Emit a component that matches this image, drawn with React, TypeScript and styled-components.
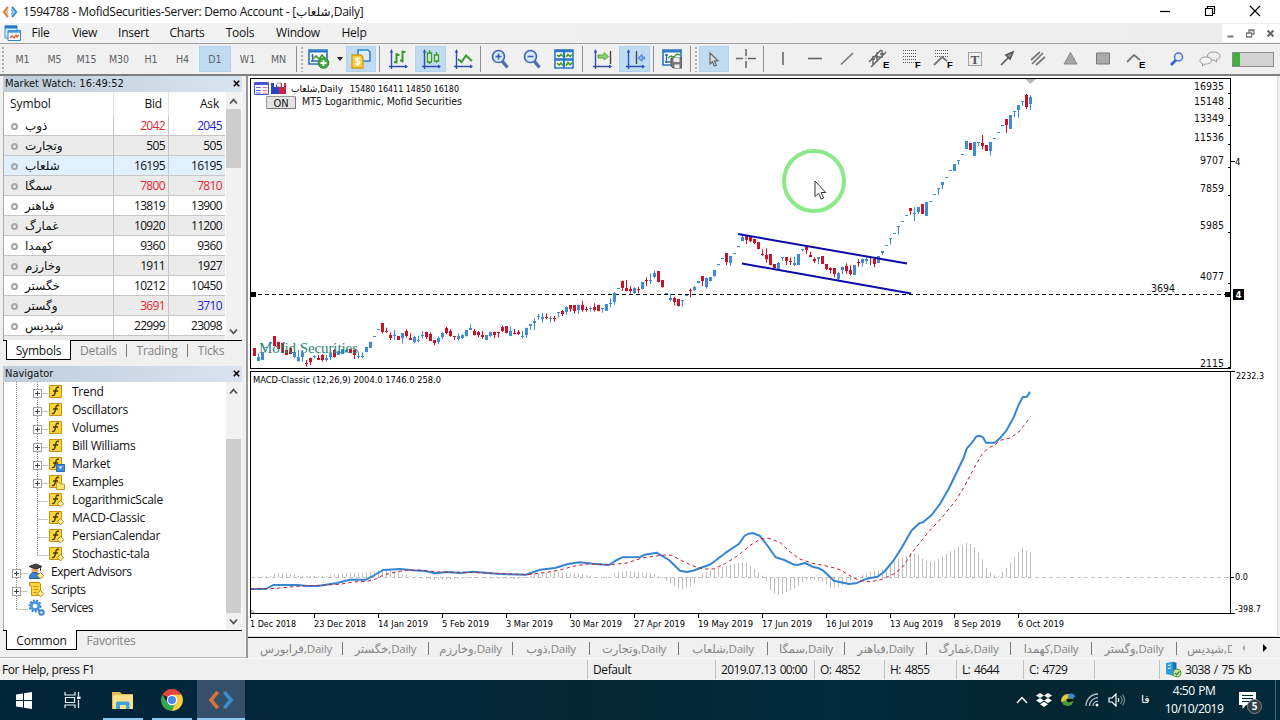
import type { ReactNode } from "react";
import styled, { createGlobalStyle, css } from "styled-components";

const GlobalStyle = createGlobalStyle`
  * { box-sizing: border-box; }
  body { margin: 0; overflow: hidden; background: #f0f0f0; }
  svg { display: block; flex-shrink: 0; }
`;

const ui = `"Open Sans", "DejaVu Sans", sans-serif`;
const tahoma = `"DejaVu Sans Condensed", "DejaVu Sans", sans-serif`;

/* ---------- data ---------- */

const MENUS: [string, number][] = [
  ["File", 39],
  ["View", 49],
  ["Insert", 49],
  ["Charts", 58],
  ["Tools", 48],
  ["Window", 68],
  ["Help", 44],
];

const PERIODS: [string, number][] = [
  ["M1", 33],
  ["M5", 31],
  ["M15", 33],
  ["M30", 32],
  ["H1", 32],
  ["H4", 31],
  ["D1", 34],
  ["W1", 31],
  ["MN", 31],
];

type Quote = { name: string; bid: string; ask: string; bidColor?: string; askColor?: string };

const RED = "#e8222e";
const BLUE = "#2222d8";

const QUOTES: Quote[] = [
  { name: "ذوب", bid: "2042", ask: "2045", bidColor: RED, askColor: BLUE },
  { name: "وتجارت", bid: "505", ask: "505" },
  { name: "شلعاب", bid: "16195", ask: "16195" },
  { name: "سمگا", bid: "7800", ask: "7810", bidColor: RED, askColor: RED },
  { name: "فباهنر", bid: "13819", ask: "13900" },
  { name: "غمارگ", bid: "10920", ask: "11200" },
  { name: "کهمدا", bid: "9360", ask: "9360" },
  { name: "وخارزم", bid: "1911", ask: "1927" },
  { name: "خگستر", bid: "10212", ask: "10450" },
  { name: "وگستر", bid: "3691", ask: "3710", bidColor: RED, askColor: BLUE },
  { name: "شپدیس", bid: "22999", ask: "23098" },
];

type NodeKind = "folder" | "market" | "examples" | "item" | "expert" | "script" | "service";

const TREE: { label: string; kind: NodeKind; root?: boolean; expand?: boolean; last?: boolean }[] = [
  { label: "Trend", kind: "folder", expand: true },
  { label: "Oscillators", kind: "folder", expand: true },
  { label: "Volumes", kind: "folder", expand: true },
  { label: "Bill Williams", kind: "folder", expand: true },
  { label: "Market", kind: "market", expand: true },
  { label: "Examples", kind: "examples", expand: true },
  { label: "LogarithmicScale", kind: "item" },
  { label: "MACD-Classic", kind: "item" },
  { label: "PersianCalendar", kind: "item" },
  { label: "Stochastic-tala", kind: "item", last: true },
  { label: "Expert Advisors", kind: "expert", root: true, expand: true },
  { label: "Scripts", kind: "script", root: true, expand: true },
  { label: "Services", kind: "service", root: true, last: true },
];

const CHART_TABS: [string, number][] = [
  ["فرابورس", 93],
  ["خگستر", 86],
  ["وخارزم", 84],
  ["ذوب", 77],
  ["وتجارت", 89],
  ["شلعاب", 89],
  ["سمگا", 77],
  ["فباهنر", 82],
  ["غمارگ", 84],
  ["کهمدا", 81],
  ["وگستر", 85],
];

const STATUS: [string, number][] = [
  ["Default", 128],
  ["2019.07.13 00:00", 99],
  ["O: 4852", 70],
  ["H: 4855", 72],
  ["L: 4644", 67],
  ["C: 4729", 71],
  ["", 65],
];

// Bars: colour, body top, body bottom, wick top, wick bottom (in thirds of a pixel)
type Bar = ["r" | "b", number, number, number?, number?];

const BARS_WINTER: Bar[] = [
  ["r", 399, 423], ["b", 425, 437, 415, 437], ["b", 410, 433], ["b", 395, 398], ["b", 380, 383],
  ["r", 363, 392], ["r", 380, 402], ["r", 383, 412], ["r", 405, 420], ["r", 398, 415],
  ["b", 410, 425, 403, 430], ["b", 425, 438, 405, 440], ["b", 415, 427, 405, 440], ["r", 445, 448, 435, 455],
  ["r", 430, 443, 428, 450], ["b", 422, 425, 420, 430], ["r", 428, 433, 420, 434], ["r", 420, 434, 418, 440],
  ["b", 428, 434, 420, 440], ["b", 415, 428, 410, 435], ["r", 405, 425, 402, 428], ["b", 408, 420],
  ["b", 402, 418], ["b", 405, 412], ["r", 402, 415], ["r", 405, 420, 403, 432], ["b", 424, 427, 410, 431],
  ["b", 424, 427, 412, 430], ["b", 397, 412], ["b", 380, 398], ["b", 363, 366], ["b", 342, 345],
  ["r", 324, 350, 324, 355], ["r", 347, 350, 338, 353], ["r", 360, 368, 352, 375], ["b", 361, 364, 345, 375],
  ["r", 363, 375], ["b", 355, 370, 355, 385], ["r", 348, 362, 343, 368], ["r", 370, 375, 355, 375],
  ["b", 366, 380, 362, 385], ["b", 375, 378, 362, 382], ["b", 361, 364, 348, 370], ["r", 352, 368, 350, 372],
  ["r", 356, 377, 352, 378], ["r", 375, 383, 375, 390], ["b", 368, 380, 364, 388], ["b", 355, 368, 352, 372],
  ["r", 339, 355, 335, 358], ["r", 348, 362, 342, 365], ["r", 363, 366, 363, 375], ["b", 362, 372, 355, 377],
  ["b", 360, 370, 358, 372], ["b", 346, 365], ["b", 338, 345, 328, 345], ["r", 348, 360, 342, 361],
  ["r", 350, 360, 348, 367], ["r", 360, 367, 347, 372], ["b", 360, 374], ["b", 352, 364, 350, 366],
  ["r", 352, 360, 350, 370], ["r", 352, 356, 350, 368], ["r", 337, 350, 332, 351], ["r", 334, 355],
  ["b", 348, 362, 335, 363], ["r", 355, 358, 342, 358], ["r", 352, 358, 345, 360], ["b", 362, 365, 348, 370],
  ["b", 340, 362, 338, 368], ["b", 328, 335, 326, 345], ["b", 318, 324, 310, 345], ["b", 304, 307, 297, 314],
];

const BARS_SPRING: Bar[] = [
  ["b", 322, 328, 308, 338], ["r", 322, 326, 310, 328], ["b", 325, 328, 318, 338], ["r", 323, 327, 318, 335],
  ["b", 306, 309, 306, 322], ["r", 302, 312, 300, 318], ["b", 292, 306, 290, 315], ["r", 286, 298, 285, 305],
  ["r", 286, 304, 286, 310], ["b", 286, 300, 284, 312], ["r", 284, 300, 272, 305], ["r", 298, 302, 290, 305],
  ["b", 294, 298, 290, 305], ["r", 290, 298, 280, 305], ["r", 286, 304], ["b", 295, 298, 295, 308],
  ["b", 282, 302], ["b", 279, 282, 265, 292], ["b", 248, 276, 246, 284], ["b", 234, 237], ["r", 214, 235, 212, 243],
  ["r", 234, 242, 210, 244], ["r", 238, 245, 228, 250], ["b", 235, 250, 232, 252], ["r", 237, 240, 230, 250],
  ["b", 216, 238], ["r", 211, 215, 202, 228], ["b", 211, 214, 190, 222], ["b", 190, 202, 182, 205], ["r", 183, 217],
  ["r", 211, 233], ["b", 249, 252], ["b", 264, 270, 252, 274], ["r", 265, 278, 260, 286], ["r", 268, 290],
  ["b", 270, 273, 270, 290], ["b", 255, 258], ["r", 240, 243, 235, 262], ["b", 232, 242, 227, 243], ["b", 214, 220],
  ["r", 199, 215, 199, 228], ["b", 204, 230, 202, 236], ["b", 202, 213], ["b", 181, 200], ["b", 163, 166],
  ["b", 145, 148], ["r", 129, 155, 129, 165], ["b", 138, 160, 138, 168], ["b", 129, 132], ["b", 108, 111],
  ["b", 80, 92, 73, 93], ["r", 78, 90, 75, 102], ["r", 80, 92, 78, 97], ["r", 87, 98, 86, 102], ["r", 97, 118],
  ["r", 132, 136, 118, 137], ["r", 135, 148, 115, 158], ["r", 132, 164], ["r", 162, 174], ["b", 158, 176, 156, 182],
  ["b", 141, 144, 141, 153], ["r", 142, 154, 141, 165], ["r", 152, 156, 142, 165], ["b", 158, 165, 140, 168],
  ["b", 132, 164], ["b", 118, 121, 118, 125], ["r", 112, 122, 106, 132], ["r", 135, 140, 125, 141],
  ["r", 147, 154, 142, 159], ["b", 141, 147, 141, 162], ["r", 138, 162], ["r", 162, 178, 162, 180],
  ["r", 175, 180, 172, 190], ["r", 175, 192, 174, 202], ["b", 190, 208, 186, 210], ["b", 172, 180, 170, 192],
  ["r", 168, 182, 160, 192], ["r", 180, 192, 166, 196], ["b", 165, 195], ["r", 156, 159, 148, 170],
];

const BARS_SUMMER: Bar[] = [
  ["b", 568, 580, 566, 590], ["b", 567, 572, 562, 582], ["r", 562, 566, 562, 585], ["r", 566, 580, 566, 592],
  ["b", 558, 578], ["b", 543, 549, 543, 554], ["b", 525, 528], ["b", 505, 508, 505, 524], ["b", 489, 492],
  ["b", 468, 471, 468, 494], ["b", 453, 456], ["b", 435, 438], ["r", 414, 424, 414, 434], ["b", 429, 432, 412, 453],
  ["b", 411, 426, 411, 432], ["r", 402, 432], ["b", 396, 438], ["b", 393, 396], ["b", 372, 375], ["b", 354, 357, 354, 375],
  ["b", 336, 345, 336, 357], ["b", 321, 324], ["b", 300, 303], ["b", 282, 302], ["b", 270, 273, 270, 284],
  ["b", 252, 255], ["b", 213, 236], ["r", 219, 240], ["b", 216, 258], ["b", 216, 219, 216, 228],
  ["r", 219, 227, 195, 238], ["r", 225, 242], ["b", 216, 244, 216, 256], ["b", 204, 207], ["b", 186, 189],
  ["b", 165, 168], ["r", 147, 164, 147, 188], ["b", 136, 177], ["b", 123, 126, 123, 140], ["b", 105, 120, 105, 144],
  ["b", 93, 96, 93, 108], ["r", 75, 110, 72, 117], ["b", 80, 102, 76, 120],
];

const BAR_RUNS = [
  { x: 254, y: 215, bars: BARS_WINTER },
  { x: 542, y: 210, bars: BARS_SPRING },
  { x: 862, y: 70, bars: BARS_SUMMER },
];

const MACD =
  "251,589 266,589 273,585 298,585 307,586 318,586 337,583 350,579.7 366,579.7 373,576 383,570 400,569 413,570.3 425,571 435,573.3 447,572 460,573 473,571.7 500,574 526,574.7 540,569.7 555,568 568,564 580,562.3 593,563.7 609,565 615,561 622,557.3 640,557 645,554.7 656.5,552.7 669,560 680,570.7 686.7,572 693,570.7 710.6,564.3 725.8,552.7 738.8,544 744.4,536 748,534 752.6,533 759.6,535.7 767,545 775.6,557.3 784.3,560 793.8,564.7 798.6,564.7 805,563 812.5,566.7 819,568.3 823.3,570.7 834,580.7 843,582.7 849,584 856,583.3 866.7,578.7 877.5,576.7 884,572 892.7,561.7 901.4,548.3 911.4,530.7 919.6,523 923,522.3 931.7,515 940.4,503.3 949,488.3 957.8,470 963.4,458.3 966.9,448.3 972,442.7 976,436.7 979.4,435.7 983,437.3 986,442.7 994.6,442.7 999.8,438.3 1006.3,430.7 1014,416.7 1018.5,405 1022.8,397 1027,396.7 1030,391.7";

const SIGNAL =
  "251,589 277,588.3 297,586.3 307,585.7 320,585.3 340,584.3 353,582 367,581.3 377,578.7 383,575 393,572.7 407,570 422,570.3 437,572 460,572.3 480,572.7 503,573.7 527,574.7 547,572.3 560,570 573,566.3 587,564 610,564.7 627,563 643,557.7 665,555 671.6,555.3 682.4,561 693,566 704,569 713.6,569 725.8,563.3 738.8,555 749.6,545.7 760.5,539 769,538.3 780,542.3 788.6,550.7 799.5,559 812.5,563.3 830,566.7 840.7,570 851.5,576.7 860,580.7 871,581.7 882,579.3 895,573.3 903.6,566 912,552.7 927.4,533.3 942.6,516.7 955.6,500.7 964.3,486.7 973,470 981.6,455 988,448.3 994.6,445 1001,440 1009.8,438 1018.5,432.3 1027,421.7 1030,416.7";

const HIST_KEYS: [number, number][] = [
  [250, 0], [270, 1], [275, 4], [285, 4], [300, 1], [325, 1], [345, 4], [360, 4], [375, 6], [385, 8], [395, 5],
  [405, 2], [420, -1], [435, -3], [450, -2], [475, -1], [520, -2], [535, 3], [550, 5], [575, 4], [590, 1],
  [607, -2], [617, 5], [626, 6], [652, 4], [665, -3], [676, -11], [682, -12], [693, -8], [700, 1], [708, 6],
  [726, 11], [734, 13], [744, 15], [752, 10], [760, 3], [765, -1], [769, -12], [773, -16], [778, -18],
  [786, -15], [795, -11], [802, -5], [808, -2], [821, -4], [830, -10], [836, -11], [843, -8], [856, 0],
  [869, 5], [884, 8], [895, 17], [904, 20], [911, 25], [919, 22], [923, 17], [932, 15], [940, 19], [949, 25],
  [958, 30], [963, 32], [967, 35], [973, 31], [979, 24], [986, 9], [992, 2], [998, 1], [1005, 8], [1012, 17],
  [1018, 25], [1023, 30], [1027, 25], [1031, 25],
];

const histAt = (x: number) => {
  const i = HIST_KEYS.findIndex(([kx]) => kx >= x);
  const [x1, v1] = HIST_KEYS[i];
  const [x0, v0] = HIST_KEYS[Math.max(0, i - 1)];
  return x1 === x0 ? v1 : v0 + ((v1 - v0) * (x - x0)) / (x1 - x0);
};

const PRICES: [string, number, number][] = [
  ["16935", 86, 30], ["15148", 101, 30], ["13349", 118, 30], ["11536", 137, 30], ["9707", 160, 24],
  ["7859", 188, 24], ["5985", 225, 24], ["4077", 276, 24], ["2115", 363, 24],
];

const DATES: [string, number, number][] = [
  ["1 Dec 2018", 250, 46], ["23 Dec 2018", 314, 52], ["14 Jan 2019", 378, 50], ["5 Feb 2019", 442, 47],
  ["3 Mar 2019", 506, 47], ["30 Mar 2019", 570, 52], ["27 Apr 2019", 634, 51], ["19 May 2019", 698, 55],
  ["17 Jun 2019", 762, 50], ["16 Jul 2019", 826, 47], ["13 Aug 2019", 890, 53], ["8 Sep 2019", 954, 47],
  ["6 Oct 2019", 1018, 46],
];

/* ---------- icons ---------- */

const Svg = ({ w = 20, h = 20, children }: { w?: number; h?: number; children: ReactNode }) => (
  <svg width={w} height={h} viewBox={`0 0 ${w} ${h}`} fill="none">
    {children}
  </svg>
);

const Logo = ({ size = 16, dim = false }: { size?: number; dim?: boolean }) => (
  <svg width={size} height={size} viewBox="0 0 16 16" fill="none" strokeWidth={dim ? 2.2 : 2}>
    <path d="M6 3 1.8 8 6 13" stroke={dim ? "#d8713a" : "#e07b3c"} />
    <path d="M10 3l4.2 5L10 13" stroke="#3a8fd0" />
    {!dim && <path d="M6 6.2 4.6 8 6 9.8" stroke="#e9a77c" strokeWidth="1.2" />}
    {!dim && <path d="M9 5.5 11 8 9 10.5" stroke="#63a9dd" strokeWidth="1.4" />}
  </svg>
);

const Axes = () => (
  <>
    <path d="M3.5 2v18M1 17.5h18" stroke="#2d50b0" strokeWidth="1.4" />
    <path d="M3.5 0 1.8 3.5h3.4zM20 17.5l-3-2v4z" fill="#2d50b0" />
  </>
);

const NewChartIcon = () => (
  <Svg w={22}>
    <path d="M1 1h18v14H1z" fill="#fff" stroke="#2774c4" strokeWidth="1.6" />
    <path d="M1 2.5h18" stroke="#2774c4" strokeWidth="2" />
    <path d="M4.5 5v8M3 12h11M3.5 7h2" stroke="#2d6ab8" strokeWidth="1.3" />
    <path d="m5 10 3-3 3 3 3-4 3 3" stroke="#3f9b2c" strokeWidth="1.6" />
    <circle cx="15.5" cy="14" r="5.3" fill="#42aa42" stroke="#2a8434" />
    <path d="M15.5 11v6M12.5 14h6" stroke="#fff" strokeWidth="2" />
  </Svg>
);

const TradeIcon = () => (
  <Svg>
    <path d="M7 1h10l2 2v9H7z" fill="#d8ecfb" stroke="#2f83cc" strokeWidth="1.6" />
    <path d="M1 6h9l2 2v11H1z" fill="#f8cf3c" stroke="#d39d13" strokeWidth="1.3" />
    <path d="M9 10c-.8-1.200-4.500-1.200-4.500.8 0 2 4.500.8 4.500 2.900 0 2-3.800 2-4.800.7M6.700 8v9" stroke="#fff" strokeWidth="1.400" />
  </Svg>
);

const BarsIcon = () => (
  <Svg>
    <Axes />
    <path d="M8.500 4v10.500M6 13h2.500M8.500 6h3M14.500 1.500v12M12 11.500h2.500M14.500 3h3" stroke="#3b9a28" strokeWidth="2" />
  </Svg>
);

const CandlesIcon = () => (
  <Svg>
    <Axes />
    <path d="M8.500 1v14M15.500 3v11" stroke="#3b9a28" strokeWidth="1.300" />
    <path d="M6.500 4h4v9h-4zM13.500 6h4v6h-4z" fill="#d8f0d0" stroke="#3b9a28" strokeWidth="1.300" />
  </Svg>
);

const LineIcon = () => (
  <Svg>
    <Axes />
    <path d="m5 10 3.500 3L13 6.500l6 5.500" stroke="#3b9a28" strokeWidth="2" />
  </Svg>
);

const ZoomIcon = ({ plus = false }: { plus?: boolean }) => (
  <Svg>
    <path d="m12.500 12.500 5 6" stroke="#4f6ea8" strokeWidth="3.400" />
    <circle cx="8.500" cy="7.500" r="6" fill="#dcebfb" stroke="#3c66b8" strokeWidth="1.700" />
    <path d="M5.500 7.500h6" stroke="#3c66b8" strokeWidth="1.600" />
    {plus && <path d="M8.500 4.500v6" stroke="#3c66b8" strokeWidth="1.600" />}
  </Svg>
);

const TileIcon = () => (
  <Svg>
    <path d="M1 1h18v18H1z" fill="#fff" stroke="#2878c8" strokeWidth="1.600" />
    <path d="M1 2h18M1 10.500h18" stroke="#2878c8" strokeWidth="2.400" />
    <path d="M10 1v18" stroke="#2878c8" strokeWidth="2" />
    <path d="m3 6 2 1.500L7 5.500l2 2M12 8l2-2.500 2 2L18 5.500M3 14l2 2 2-2 2 2.500M12 17l2-3.500 2 2.500L18 13.500" stroke="#3b9a28" strokeWidth="1.600" />
  </Svg>
);

const ShiftIcon = ({ back = false }: { back?: boolean }) => (
  <Svg>
    <Axes />
    {back ? (
      <>
        <path d="M11.500 2v13" stroke="#444" strokeWidth="1.400" />
        <path d="M20 8h-3V5.500L13 9l4 3.500V10h3z" fill="#85b4ec" stroke="#3b70c0" strokeWidth=".8" />
      </>
    ) : (
      <>
        <path d="M18.500 2v13" stroke="#444" strokeWidth="1.400" />
        <path d="M6 6h6V3.500L16.500 7.500 12 11V9H6z" fill="#8ed668" stroke="#3b9a28" strokeWidth=".8" />
      </>
    )}
  </Svg>
);

const TemplateIcon = () => (
  <Svg>
    <path d="M1 1h18v15H1z" fill="#fff" stroke="#2774c4" strokeWidth="1.600" />
    <path d="M1 2.500h18" stroke="#2774c4" strokeWidth="2" />
    <path d="M4.500 5v9M3 6h3M3 13h6" stroke="#2d6ab8" strokeWidth="1.300" />
    <path d="m6 9 3-2 3 1 3-3 3 1" stroke="#3b9a28" strokeWidth="1.500" />
    <path d="M9 9h11v10h-9l-2-2z" fill="#777" stroke="#555" />
    <path d="M11.500 9h6v4h-6zM12.500 15.500h5V19h-5z" fill="#eee" />
  </Svg>
);

const PointerIcon = () => (
  <Svg>
    <path d="M6 4v11l2.500-2.300 1.800 4.300 2-.9-1.800-4 3.500-.4z" fill="#ddd" stroke="#666" strokeWidth="1.200" />
  </Svg>
);

const CrossIcon = () => (
  <Svg>
    <path d="M10 0v7M10 12v7M0 9.500h7M12 9.500h8M9.500 9.500h1" stroke="#666" strokeWidth="1.500" />
  </Svg>
);

const gray = "#777";

const Letter = ({ children }: { children: string }) => (
  <text x="15" y="18.500" fontFamily="Liberation Sans" fontWeight="700" fontSize="9.500" fill="#000">
    {children}
  </text>
);

const Dots = ({ rows }: { rows: number }) => (
  <g stroke="#555" strokeDasharray="1 1">
    {Array.from({ length: rows }, (_, i) => (
      <path key={i} d={`M3 ${1.500 + i * 3}h14`} />
    ))}
  </g>
);

const DRAW_TOOLS: ReactNode[] = [
  <path d="M11 3v13" stroke="#666" strokeWidth="1.600" />,
  <path d="M4 9.500h14" stroke="#666" strokeWidth="1.600" />,
  <path d="M5 15.500 17 4" stroke={gray} strokeWidth="1.700" />,
  <>
    <path d="M1 13 13 1M3 18 18 3M5 7v10M3 10h4M9 3v10M7 8h5M14 1v8M12 5h5" stroke="#666" strokeWidth="1.500" />
    <Letter>E</Letter>
  </>,
  <>
    <Dots rows={5} />
    <Letter>F</Letter>
  </>,
  <>
    <Dots rows={3} />
    <path d="M2 16 10 8l5 4" stroke={gray} strokeWidth="1.800" />
    <Letter>F</Letter>
  </>,
  <>
    <path d="M4.500 3.500h13v13h-13z" stroke="#555" strokeDasharray="1 1" />
    <text x="6.500" y="14.500" fontFamily="Liberation Serif" fontWeight="700" fontSize="13" fill="#555">
      T
    </text>
  </>,
  <path d="m5 16 8-8M10 6l7-3-3 7z" fill="#999" stroke="#555" strokeWidth="1.600" />,
  <path d="m3 11 9-8M4 15 15 4M8 16l9-8" stroke={gray} strokeWidth="1.700" />,
  <path d="M10.500 3.500 17 15H4z" fill="#a5a5a5" stroke="#888" />,
  <path d="M4.500 4h13v11h-13z" fill="#aaa" stroke="#777" />,
  <>
    <path d="m3 13 7-7 6 5" stroke={gray} strokeWidth="1.800" />
    <Letter>E</Letter>
  </>,
];

const FunctionIcon = ({ kind }: { kind: NodeKind }) => (
  <Svg w={17} h={17}>
    <path d="M1.500 2.500h12v12h-12z" fill="#fbd635" stroke="#c7930c" />
    <path d="M11 4.500c-2.600-1-3 .8-3.600 4S6.300 13 4 12.300M5 8h5" stroke="#443a10" strokeWidth="1.400" />
    {kind === "item" && <path d="m12.500 9.500 3.200 3.200-3.200 3.200-3.200-3.200z" fill="#fff3a0" stroke="#b08616" />}
    {kind === "market" && (
      <>
        <path d="M8.500 9.500h8v7h-8z" fill="#3f8be0" stroke="#2a6cbc" />
        <path d="m10.500 11.500 2 2.500 2-2.500z" fill="#fff" />
      </>
    )}
    {kind === "examples" && <path d="M8.500 9.500h3l1 1.500h4v5.500h-8z" fill="#fbe780" stroke="#c49a20" />}
  </Svg>
);

const NodeIcon = ({ kind }: { kind: NodeKind }) => {
  if (kind === "expert")
    return (
      <Svg w={17} h={17}>
        <circle cx="7" cy="7" r="3.500" fill="#e8b06c" />
        <path d="M1 3.500 8 1l6 2.500L8 6zM12.500 4v4" fill="#444" stroke="#333" />
        <path d="M1.500 15.500c0-5 2-6 5.500-6s5 2 5 6z" fill="#3c7fcf" stroke="#2b5f9e" />
        <path d="m12.500 9.500 3.200 3.200-3.200 3.200-3.200-3.200z" fill="#fff3a0" stroke="#b08616" />
      </Svg>
    );
  if (kind === "script")
    return (
      <Svg w={17} h={17}>
        <path d="M1.500 1.500h10l1 1.500v11.500h-9V5h-2z" fill="#fcd63c" stroke="#c7930c" />
        <path d="M5.500 5.500h5M5.500 8.500h5M5.500 11.500h3" stroke="#c7930c" />
        <path d="m12.500 9.500 3.200 3.200-3.200 3.200-3.200-3.200z" fill="#fff3a0" stroke="#b08616" />
      </Svg>
    );
  if (kind === "service")
    return (
      <Svg w={17} h={17}>
        <circle cx="7" cy="7" r="5.500" stroke="#3f84cc" strokeWidth="2" strokeDasharray="2 1.300" />
        <circle cx="7" cy="7" r="3.700" stroke="#4b93dc" strokeWidth="2.800" />
        <circle cx="13.500" cy="13.500" r="2.200" stroke="#3f84cc" strokeWidth="2" />
      </Svg>
    );
  return <FunctionIcon kind={kind} />;
};

const Guides = ({ root, expand, last }: { root?: boolean; expand?: boolean; last?: boolean }) => {
  const x = root ? 12.500 : 33.500;
  const end = root ? 24 : 44;
  return (
    <svg width={root ? 24 : 44} height="18" fill="none">
      <g stroke="#8c8c8c" strokeDasharray="1 1">
        {!root && <path d="M12.500 0v18" />}
        <path d={`M${x} 0v${last ? 11 : 18}M${x} 11.500H${end}`} />
      </g>
      {expand && (
        <>
          <rect x={x - 4} y="7.500" width="8" height="8" fill="#fff" stroke="#a0a0a0" />
          <path d={`M${x - 2.500} 11.500h5M${x} 9v5`} stroke="#444" />
        </>
      )}
    </svg>
  );
};

const CloseX = () => (
  <Svg w={7} h={7}>
    <path d="m.8.8 5.400 5.400M6.200.8.800 6.200" stroke="#000" strokeWidth="1.600" />
  </Svg>
);

const Chevron = ({ up = false }: { up?: boolean }) => (
  <Svg w={9} h={7}>
    <path d={up ? "M1 5.500l3.500-3.800L8 5.500" : "M1 1.500l3.500 3.800L8 1.500"} stroke="#555" strokeWidth="1.800" />
  </Svg>
);

/* ---------- chart ---------- */

const Candle = ({ x, y, bar }: { x: number; y: number; bar: Bar }) => {
  const [kind, top, bottom, high = top, low = bottom] = bar;
  const fill = kind === "r" ? "#cf1125" : "#3d8bdc";
  const body = Math.max(1, Math.round((bottom - top) / 3));
  return (
    <g fill={fill}>
      <rect x={x} y={y + high / 3} width="1" height={Math.max(1, (low - high) / 3)} />
      <rect x={x - 1} y={Math.round(y + top / 3)} width="3" height={body} />
    </g>
  );
};

const PriceChart = () => (
  <svg width="1032" height="561" viewBox="248 76 1032 561" fill="none">
    <rect x="248" y="76" width="1029" height="561" fill="#fff" />
    <path d="M1277.500 76v560M248 636.500h1029" stroke="#dcdcdc" />
    <rect x="1278" y="76" width="2" height="561" fill="#f0f0f0" />

    <g stroke="#000" shapeRendering="crispEdges">
      <path d="M250.500 78.500h980v290h-980zM250.500 371.500h980v242h-980z" />
      {PRICES.map(([label, y]) => (
        <path key={label} d={`M1228 ${label === "2115" ? 367.500 : y + 7.500}h3`} />
      ))}
      <path d="M1231 161.500h4M1231 371.500h4M1231 577.500h3M1231 613.500h4" />
      {DATES.map(([label, x]) => (
        <path key={label} d={`M${x + 0.500} 614v4`} />
      ))}
      <path d="M251 294.500h979" strokeDasharray="4 3" />
    </g>
    <path d="M251 292h5v5h-5zM1225 292h6v5h-6zM1233 289h11v11h-11z" fill="#000" />
    <path d="M1025 79h11l-5.500 5zM251 609l4 4h-4z" fill="#bbb" />

    {BAR_RUNS.map((run) =>
      run.bars.map((bar, i) => <Candle key={run.x + i * 4} x={run.x + i * 4} y={run.y} bar={bar} />)
    )}

    <text x="259" y="353" fontFamily="Liberation Serif" fontSize="15" fill="#2b8575" textLength="99">
      Mofid Securities
    </text>

    <path d="M738 234 907 263.500M742 263.500l169 30" stroke="#0a0aa8" strokeWidth="2" />

    {/* indicator window */}
    <path d="M251 577.500h979" stroke="#c4c4c4" strokeDasharray="4 3" />
    <g fill="#bdbdbd">
      {Array.from({ length: 195 }, (_, i) => {
        const x = 254 + i * 4;
        const v = histAt(x);
        return <rect key={x} x={x} y={v > 0 ? 577 - v : 577} width="1" height={Math.abs(v)} />;
      })}
    </g>
    <polyline points={MACD} stroke="#3585d2" strokeWidth="2" strokeLinejoin="round" />
    <polyline points={SIGNAL} stroke="#c41e34" strokeDasharray="3.500 3" />

    {/* labels */}
    <g fontFamily={tahoma} fill="#111" fontSize="11">
      {PRICES.map(([label, y, w]) => (
        <text key={label} x={1224 - w} y={y + 4} textLength={w} lengthAdjust="spacingAndGlyphs">
          {label}
        </text>
      ))}
      <text x="1151" y="292" textLength="24" lengthAdjust="spacingAndGlyphs">3694</text>
      <text x="302" y="105" textLength="160" lengthAdjust="spacingAndGlyphs">
        MT5 Logarithmic, Mofid Securities
      </text>
    </g>
    <g fontFamily={tahoma} fill="#000" fontSize="9.500">
      {DATES.map(([label, x, w]) => (
        <text key={label} x={x} y="627" textLength={w} lengthAdjust="spacingAndGlyphs">
          {label}
        </text>
      ))}
      <text x="1235" y="165">4</text>
      <text x="1235.500" y="298" fill="#fff" fontWeight="700">4</text>
      <text x="1236" y="379" textLength="28" lengthAdjust="spacingAndGlyphs">2232.3</text>
      <text x="1235" y="580" textLength="13" lengthAdjust="spacingAndGlyphs">0.0</text>
      <text x="1235" y="612" textLength="26" lengthAdjust="spacingAndGlyphs">-398.7</text>
      <text x="253" y="383" textLength="188" lengthAdjust="spacingAndGlyphs">
        MACD-Classic (12,26,9) 2004.0 1746.0 258.0
      </text>
      <text x="291" y="92" textLength="52" lengthAdjust="spacingAndGlyphs">شلعاب,Daily</text>
      <text x="350" y="92" textLength="109" lengthAdjust="spacingAndGlyphs">15480 16411 14850 16180</text>
    </g>

    {/* one-click trading and depth buttons */}
    <path d="M254.500 82.500h14v12h-14z" fill="#fff" stroke="#4858c8" />
    <path d="M255 83h13v2h-13z" fill="#4858c8" />
    <path d="M256 87.500h5M256 90.500h5M256 93h5" stroke="#5f74e0" />
    <path d="M262.500 87.500h5M262.500 90.500h5M262.500 93h5" stroke="#e07888" />
    <path d="M271 83h3v4h2v-2h3v9h-8z" fill="#2b3fc4" />
    <path d="M279 83h3v4h2v-4h2v11h-7z" fill="#cc2444" />
    <path d="M277 83h4v4h-4z" fill="#fff" stroke="#667" strokeWidth=".6" />

    <path d="M266.500 96.500h29v12h-29z" fill="#e3e3e3" stroke="#999" />
    <path d="M267 108.500h28.500V97" stroke="#777" />
    <text x="281" y="107" fontFamily={tahoma} fontSize="11" fill="#111" textAnchor="middle">
      ON
    </text>

    <circle cx="814" cy="181" r="30" stroke="#8ce88a" strokeWidth="4" />
    <path
      d="M815 181v15.500l3.600-3.200 2.600 5.800 2.400-1-2.500-5.600h4.600z"
      fill="#fff"
      stroke="#333"
    />
  </svg>
);

/* ---------- app ---------- */

const App = () => (
  <S.Window>
    <GlobalStyle />
    <S.TitleBar>
      <Logo />
      <S.Title>1594788 - MofidSecurities-Server: Demo Account - [شلعاب,Daily]</S.Title>
      <S.Controls>
        <Svg w={12} h={12}><path d="M1 6.500h10" stroke="#000" strokeWidth="1.200" /></Svg>
        <Svg w={12} h={12}><path d="M1.500 3.500h7v7h-7zM3.500 3V1.500h7v7H9" stroke="#000" strokeWidth="1.200" /></Svg>
        <Svg w={12} h={12}><path d="m1 1 10 10M11 1 1 11" stroke="#000" strokeWidth="1.200" /></Svg>
      </S.Controls>
    </S.TitleBar>

    <S.MenuBar>
      <Svg w={17} h={17}>
        <path d="M1 1h12v12H1z" fill="#d8ecfb" stroke="#3a8cd6" />
        <path d="M1 2h12" stroke="#2578c8" strokeWidth="3" />
        <path d="M4 5.500h12.500v10H4z" fill="#fff" stroke="#2f85d2" />
        <path d="M4 6.500h12.500" stroke="#4a9ae0" strokeWidth="2.500" />
        <path d="m6 13 2-2 2 2 2-3 1 2 2-2" stroke="#e0582c" strokeWidth="1.300" />
      </Svg>
      <S.Menus>
        {MENUS.map(([label, w]) => (
          <S.Menu key={label} $w={w}>{label}</S.Menu>
        ))}
      </S.Menus>
      <S.MdiControls>
        <Svg w={9} h={9}><path d="M1.500 7.500h6" stroke="#777" strokeWidth="2" /></Svg>
        <Svg w={9} h={9}><path d="M.5 4h5v4h-5zM3 3.500V1h5v4H6M3 1.500h5" stroke="#777" strokeWidth="1.300" /></Svg>
        <Svg w={9} h={9}><path d="m1.500 1.500 6 6M7.500 1.500l-6 6" stroke="#666" strokeWidth="2" /></Svg>
      </S.MdiControls>
    </S.MenuBar>

    <S.Toolbar>
      <S.Grip />
      {PERIODS.map(([label, w]) => (
        <S.Tool key={label} $w={w} $active={label === "D1"}>{label}</S.Tool>
      ))}
      <S.Separator $w={5} />
      <S.Grip $w={4} />
      <S.Tool $w={32}><NewChartIcon /></S.Tool>
      <S.Tool $w={10}><S.Caret /></S.Tool>
      <S.Tool $w={32} $active><TradeIcon /></S.Tool>
      <S.Separator $w={5} />
      <S.Tool $w={32}><BarsIcon /></S.Tool>
      <S.Tool $w={33} $active><CandlesIcon /></S.Tool>
      <S.Tool $w={31}><LineIcon /></S.Tool>
      <S.Separator $w={6} />
      <S.Tool $w={32}><ZoomIcon plus /></S.Tool>
      <S.Tool $w={32}><ZoomIcon /></S.Tool>
      <S.Tool $w={32}><TileIcon /></S.Tool>
      <S.Separator $w={6} />
      <S.Tool $w={32}><ShiftIcon /></S.Tool>
      <S.Tool $w={33} $active><ShiftIcon back /></S.Tool>
      <S.Separator $w={5} />
      <S.Tool $w={32}><TemplateIcon /></S.Tool>
      <S.Separator $w={5} />
      <S.Grip $w={5} />
      <S.Tool $w={32} $active><PointerIcon /></S.Tool>
      <S.Tool $w={31}><CrossIcon /></S.Tool>
      <S.Separator $w={6} />
      {DRAW_TOOLS.map((icon, i) => (
        <S.Tool key={i} $w={32}>
          <Svg w={22}>{icon}</Svg>
        </S.Tool>
      ))}
      <S.Right>
        <S.Tool $w={32}>
          <Svg w={14} h={14}>
            <path d="M6.500 7.500 1 13" stroke="#3a5fd0" strokeWidth="2.600" />
            <circle cx="8.500" cy="5" r="4" fill="#e4eefc" stroke="#4a6edc" strokeWidth="1.500" />
          </Svg>
        </S.Tool>
        <S.Tool $w={34}>
          <Svg w={22} h={16}>
            <path d="M14 1c4 0 7 1.500 7 4 0 2-1.500 3-3.500 3.600V11l-2.500-2c-4 0-6.500-1.500-6.500-4 0-2.500 2-4 5.500-4z" fill="#eee" stroke="#999" />
            <path d="M6.500 6C3 6 1 7.500 1 9.500c0 1.500 1 2.500 2.500 3V15L6 13c4 0 6.500-1 6.500-3.500S10 6 6.500 6z" fill="#f4f4f4" stroke="#999" />
          </Svg>
        </S.Tool>
        <S.Progress />
      </S.Right>
    </S.Toolbar>

    <S.Body>
      <S.Side>
        <S.PanelHead>
          Market Watch: 16:49:52
          <CloseX />
        </S.PanelHead>
        <S.Panel $h={248}>
          <S.Table>
            <S.QuoteHead>
              <S.Name>Symbol</S.Name>
              <S.Num $w={55}>Bid</S.Num>
              <S.Num $w={57}>Ask</S.Num>
            </S.QuoteHead>
            {QUOTES.map((q, i) => (
              <S.Quote key={q.name} $alt={i % 2 === 1} $selected={i === 2}>
                <S.Name>
                  <S.Dot />
                  {q.name}
                </S.Name>
                <S.Num $w={55} $color={q.bidColor}>{q.bid}</S.Num>
                <S.Num $w={57} $color={q.askColor}>{q.ask}</S.Num>
              </S.Quote>
            ))}
            <S.Quote $alt>
              <S.Name />
              <S.Num $w={55} />
              <S.Num $w={57} />
            </S.Quote>
          </S.Table>
          <S.Scroll>
            <Chevron up />
            <S.Track><S.Thumb $top={0} $h={59} /></S.Track>
            <Chevron />
          </S.Scroll>
        </S.Panel>
        <S.Tabs>
          <S.ActiveTab $w={65}>Symbols</S.ActiveTab>
          <S.Tab $w={55}>Details</S.Tab>
          <S.Tab $w={61} $line>Trading</S.Tab>
          <S.Tab $w={47} $line>Ticks</S.Tab>
        </S.Tabs>

        <S.PanelHead $gap>
          Navigator
          <CloseX />
        </S.PanelHead>
        <S.Panel $h={248}>
          <S.Tree>
            {TREE.map((n) => (
              <S.Node key={n.label}>
                <Guides root={n.root} expand={n.expand} last={n.last} />
                <NodeIcon kind={n.kind} />
                <S.NodeLabel $root={n.root}>{n.label}</S.NodeLabel>
              </S.Node>
            ))}
          </S.Tree>
          <S.Scroll>
            <Chevron up />
            <S.Track><S.Thumb $top={40} $h={174} /></S.Track>
            <Chevron />
          </S.Scroll>
        </S.Panel>
        <S.Tabs>
          <S.ActiveTab $w={71}>Common</S.ActiveTab>
          <S.Tab $w={68}>Favorites</S.Tab>
        </S.Tabs>
      </S.Side>

      <S.Main>
        <PriceChart />
        <S.ChartTabs>
          {CHART_TABS.map(([name, w]) => (
            <S.ChartTab key={name} $w={w}>{name},Daily</S.ChartTab>
          ))}
          <S.CutTab>شپدیس,Daily</S.CutTab>
          <S.TabArrows>
            <Svg w={5} h={8}><path d="M4 1v6L1 4z" fill="#aaa" /></Svg>
            <Svg w={5} h={8}><path d="M1 0v8l4-4z" fill="#000" /></Svg>
          </S.TabArrows>
        </S.ChartTabs>
      </S.Main>
    </S.Body>

    <S.StatusBar>
      <S.Help>For Help, press F1</S.Help>
      {STATUS.map(([label, w], i) => (
        <S.StatusCell key={i} $w={w}>{label}</S.StatusCell>
      ))}
      <S.StatusCell $w={121}>
        <Svg w={17} h={17}>
          <path d="M1 2 8 .8v14L1 13z" fill="#2d9be0" />
          <path d="m8 .8 3.500 1V14L8 15z" fill="#1874b8" />
          <path d="M3 4.500l3-.5M3 7.500 6 7" stroke="#fff" />
          <circle cx="12" cy="12" r="4" fill="#cbe8a8" stroke="#5c9a30" />
          <path d="m10 12 1.700 1.700L14.300 10.500" stroke="#3c8a20" strokeWidth="1.300" />
        </Svg>
        3038 / 75 Kb
      </S.StatusCell>
    </S.StatusBar>

    <S.Taskbar>
      <S.Task $w={48}>
        <Svg w={17} h={17}>
          <path d="M0 2.500 7 1.500V8H0zM8 1.300 16 0v8H8zM0 9h7v6.500l-7-1zM8 9h8v8l-8-1.300z" fill="#fff" />
        </Svg>
      </S.Task>
      <S.Task $w={48}>
        <Svg w={17} h={16}>
          <path d="M1 0v3h10V0M1 16v-3h10v3M1.500 5.500h9v5h-9zM14.500 0v4M14.500 8v8" stroke="#eee" strokeWidth="1.200" />
          <path d="M13 4.500h3.500v2.500H13z" fill="#fff" />
        </Svg>
      </S.Task>
      <S.Task $w={53} $bar={40}>
        <Svg w={22} h={19}>
          <path d="M0 1h8l2 2h11v15H0z" fill="#e9b94a" />
          <path d="M1 4h20v14H1z" fill="#fbe08c" />
          <path d="M4 18v-6q0-1.500 1.500-1.500h10.500q1.500 0 1.500 1.500v6h-3.500v-4h-6v4z" fill="#3fa4dc" />
        </Svg>
      </S.Task>
      <S.Task $w={46} $bar={40}>
        <svg width="22" height="22" viewBox="-11 -11 22 22">
          <path d="M0 0-9.500-5.500A11 11 0 0 1 9.500-5.500L9.500-5H0z" fill="#e04a3c" />
          <path d="M0 0 0-5.300H9.600A11 11 0 0 1 0 11z" fill="#fbcf3c" />
          <path d="M0 11A11 11 0 0 1-9.500-5.500L-4.500 3 3 4z" fill="#3aa556" />
          <circle r="5.200" fill="#fff" />
          <circle r="4" fill="#4a87ec" />
        </svg>
      </S.Task>
      <S.Task $w={51} $bar={48} $active>
        <Logo size={26} dim />
      </S.Task>
      <S.Tray>
        <Svg w={12} h={8}><path d="m1 7 5-5.500L11 7" stroke="#fff" strokeWidth="1.400" /></Svg>
        <Svg w={16} h={15}>
          <path d="m4 0 4 2.500L4 5 0 2.500zM12 0l4 2.500L12 5 8 2.500zM4 5l4 2.500L4 10 0 7.500zM12 5l4 2.500-4 2.500-4-2.500zM8 8.800l4 2.500-4 2.700-4-2.700z" fill="#fff" />
        </Svg>
        <Svg w={17} h={16}>
          <circle cx="7.500" cy="8" r="6" fill="#4d9c38" />
          <path d="M1 10C1 5 4 2 9 2L7 8z" fill="#e8c83c" />
          <path d="M8 3c3-3 7-1 7 2l-4 2z" fill="#3d86d8" />
          <path d="M6 7.500c3-1.500 7-.5 9 1l-7 2z" fill="#111" />
        </Svg>
        <Svg w={15} h={14}>
          <path d="M1 13A12 12 0 0 1 13 1M4.500 13A8.500 8.500 0 0 1 13 4.700M8 13a5 5 0 0 1 5-4.800" stroke="#b9c6cd" strokeWidth="1.300" />
          <circle cx="12" cy="12" r="1.500" fill="#fff" />
        </Svg>
        <Svg w={17} h={14}>
          <path d="M1 5h3l4-4v12L4 9H1zM10 5q1.500 2 0 4" stroke="#fff" strokeWidth="1.200" />
          <path d="M12.500 3q3 4 0 8M14.500 1.500q4 5.500 0 11" stroke="#7b8f99" strokeWidth="1.100" />
        </Svg>
      </S.Tray>
      <S.Lang>فا</S.Lang>
      <S.Clock>
        <span>4:50 PM</span>
        <span>10/10/2019</span>
      </S.Clock>
      <S.Notice>
        <Svg w={17} h={17}>
          <path d="M0 0h17v13H7l-3.500 4v-4H0z" fill="#fff" />
          <path d="M3 3.500h11M3 6.500h11M3 9.500h7" stroke="#02263a" />
        </Svg>
        <S.Badge>5</S.Badge>
      </S.Notice>
      <S.ShowDesktop />
    </S.Taskbar>
  </S.Window>
);

export default App;

const activeFill = css`
  background: #c0dcf3;
  border: 1px solid #b2d2ee;
`;

const S = {
  Window: styled.div`
    display: flex;
    flex-direction: column;
    width: 1280px;
    height: 720px;
    overflow: hidden;
    background: #f0f0f0;
    color: #111;
    font-family: ${ui};
    font-size: 12px;
    white-space: nowrap;
  `,
  //
  TitleBar: styled.div`
    display: flex;
    align-items: center;
    height: 23px;
    padding-left: 2px;
    background: #fff;
  `,
  Title: styled.span`
    margin-left: 5px;
    letter-spacing: -0.28px;
  `,
  Controls: styled.div`
    display: flex;
    gap: 33px;
    margin: 0 19px 2px auto;
  `,
  //
  MenuBar: styled.div`
    display: flex;
    align-items: center;
    height: 20px;
    padding-left: 4px;
    background: linear-gradient(90deg, #f3f3f3, #ececec);
  `,
  Menus: styled.div`
    display: flex;
    height: 20px;
    line-height: 19px;
  `,
  Menu: styled.span<{ $w: number }>`
    width: ${({ $w }) => $w}px;
    text-align: center;
    letter-spacing: -0.25px;
  `,
  MdiControls: styled.div`
    display: flex;
    align-items: center;
    gap: 11px;
    height: 18px;
    margin-left: auto;
    padding: 0 5px 0 4px;
    background: #fff;
  `,
  //
  Toolbar: styled.div`
    display: flex;
    align-items: center;
    height: 33px;
    border-top: 1px solid #a0a0a0;
    border-bottom: 2px solid #808080;
    background: #f0f0f0;
  `,
  Grip: styled.i<{ $w?: number }>`
    width: ${({ $w = 6 }) => $w}px;
    height: 26px;
    background: radial-gradient(circle at 2px 2px, #b0b0b0 1px, transparent 1.3px) 1px 0 / 4px 4px repeat-y;
  `,
  Tool: styled.button<{ $w: number; $active?: boolean }>`
    display: flex;
    align-items: center;
    justify-content: center;
    flex-shrink: 0;
    width: ${({ $w, $active }) => ($active ? $w - 2 : $w)}px;
    height: 26px;
    margin: ${({ $active }) => ($active ? "0 1px" : 0)};
    padding: 0;
    border: 0;
    background: none;
    color: #606060;
    font-family: ${tahoma};
    font-size: 10.5px;
    ${({ $active }) => $active && activeFill}
  `,
  Separator: styled.i<{ $w: number }>`
    width: ${({ $w }) => $w}px;
    height: 26px;
    background: linear-gradient(#8f8f8f, #8f8f8f) 2px 0 / 1px 100% no-repeat;
  `,
  Caret: styled.i`
    border: 3.5px solid transparent;
    border-top: 4px solid #222;
    border-bottom: 0;
  `,
  Right: styled.div`
    display: flex;
    align-items: center;
    margin-left: auto;
    padding-right: 6px;
  `,
  Progress: styled.div`
    width: 42px;
    height: 15px;
    margin-left: 5px;
    border: 1px solid #8c8c8c;
    background: linear-gradient(90deg, #43b03e 7px, #d2d2d2 7px);
  `,
  //
  Body: styled.div`
    display: flex;
    height: 582px;
  `,
  Side: styled.div`
    display: flex;
    flex-direction: column;
    width: 246px;
    height: 582px;
    padding: 0 4px 0 3px;
    border-bottom: 1px solid #b5b5b5;
  `,
  PanelHead: styled.div<{ $gap?: boolean }>`
    display: flex;
    align-items: center;
    justify-content: space-between;
    height: 16px;
    margin-top: ${({ $gap }) => ($gap ? 6 : 0)}px;
    padding: 0 2px 1px;
    background: linear-gradient(90deg, #bfcddb, #d8e3ef);
    font-family: ${tahoma};
    font-size: 11px;
  `,
  Panel: styled.div<{ $h: number }>`
    display: flex;
    justify-content: space-between;
    height: ${({ $h }) => $h}px;
    padding-right: 1px;
    border-left: 1px solid #a8a8a8;
    background: #fff;
    overflow: hidden;
  `,
  Table: styled.div`
    width: 221px;
  `,
  QuoteHead: styled.div`
    display: flex;
    height: 24px;
    line-height: 24px;

    & > span + span {
      padding-right: 6px;
      border-color: #e2e2e2;
      letter-spacing: -0.2px;
    }
  `,
  Quote: styled.div<{ $alt?: boolean; $selected?: boolean }>`
    display: flex;
    height: 20px;
    line-height: 19px;
    border-bottom: 1px solid #c6c6c6;
    background: ${({ $alt, $selected }) => ($selected ? "#e0f0ff" : $alt ? "#ebebeb" : "#fff")};
  `,
  Name: styled.span`
    display: flex;
    align-items: center;
    width: 109px;
    padding-left: 6px;
    letter-spacing: -0.1px;
  `,
  Num: styled.span<{ $w: number; $color?: string }>`
    width: ${({ $w }) => $w}px;
    padding-right: 3px;
    border-left: 1px solid #c6c6c6;
    color: ${({ $color = "#111" }) => $color};
    text-align: right;
    letter-spacing: -0.65px;
  `,
  Dot: styled.i`
    width: 7px;
    height: 7px;
    margin: 1px 7px 0 1px;
    border: 2px solid #a6a6a6;
    border-radius: 50%;
  `,
  Scroll: styled.div`
    display: flex;
    flex-direction: column;
    align-items: center;
    width: 15px;
    padding: 6px 0 5px;
    background: #f1f1f1;
  `,
  Track: styled.div`
    flex-grow: 1;
    width: 15px;
    margin: 4px 0;
  `,
  Thumb: styled.div<{ $top: number; $h: number }>`
    height: ${({ $h }) => $h}px;
    margin-top: ${({ $top }) => $top}px;
    background: #cdcdcd;
  `,
  //
  Tabs: styled.div`
    display: flex;
    height: 20px;
    padding-left: 3px;
    border-top: 1px solid #000;
  `,
  ActiveTab: styled.span<{ $w: number }>`
    width: ${({ $w }) => $w}px;
    height: 20px;
    margin-top: -1px;
    border: solid #000;
    border-width: 0 1px 1px;
    background: #fff;
    line-height: 21px;
    text-align: center;
    letter-spacing: -0.2px;
  `,
  Tab: styled.span<{ $w: number; $line?: boolean }>`
    width: ${({ $w }) => $w}px;
    height: 13px;
    margin-top: 3px;
    border-left: ${({ $line }) => ($line ? "1px solid #777" : 0)};
    color: #828282;
    line-height: 14px;
    text-align: center;
    letter-spacing: -0.2px;
  `,
  //
  Tree: styled.div`
    width: 221px;
  `,
  Node: styled.div`
    display: flex;
    align-items: center;
    height: 18px;
  `,
  NodeLabel: styled.span<{ $root?: boolean }>`
    margin-left: ${({ $root }) => ($root ? 6 : 7)}px;
    letter-spacing: ${({ $root }) => ($root ? -0.42 : -0.25)}px;
  `,
  //
  Main: styled.div`
    display: flex;
    flex-direction: column;
    width: 1034px;
    border-left: 2px solid #999;
  `,
  ChartTabs: styled.div`
    display: flex;
    align-items: center;
    height: 21px;
    padding-left: 2px;
    border-top: 1px solid #000;
    color: #858585;
    font-size: 11.5px;
    letter-spacing: -0.25px;
  `,
  ChartTab: styled.span<{ $w: number }>`
    width: ${({ $w }) => $w}px;
    height: 13px;
    flex-shrink: 0;
    border-right: 1px solid #777;
    line-height: 13px;
    text-align: center;
  `,
  CutTab: styled.span`
    width: 55px;
    padding-left: 10px;
    overflow: hidden;
  `,
  TabArrows: styled.div`
    display: flex;
    gap: 16px;
    margin-left: 9px;
  `,
  //
  StatusBar: styled.div`
    display: flex;
    align-items: center;
    height: 22px;
    border-top: 1px solid #fafafa;
  `,
  Help: styled.span`
    width: 587px;
    padding-left: 2px;
    letter-spacing: -0.5px;
    word-spacing: 0.5px;
  `,
  StatusCell: styled.span<{ $w: number }>`
    display: flex;
    align-items: center;
    gap: 3px;
    width: ${({ $w }) => $w}px;
    height: 19px;
    padding-left: 5px;
    border-left: 1px solid #c2c2c2;
    letter-spacing: -0.65px;
    word-spacing: 1.5px;

    &:nth-child(2) {
      letter-spacing: -0.4px;
    }
  `,
  //
  Taskbar: styled.div`
    display: flex;
    height: 40px;
    background: linear-gradient(90deg, #02243a, #04283a 35%, #052631 45%, #022b3b 65%, #042530 80%, #022a3c);
    color: #fff;
  `,
  Task: styled.div<{ $w: number; $bar?: number; $active?: boolean }>`
    display: flex;
    align-items: center;
    justify-content: center;
    width: ${({ $w }) => $w}px;
    background:
      linear-gradient(#8fc8ee, #8fc8ee) center bottom / ${({ $bar = 0 }) => $bar}px 2px no-repeat,
      linear-gradient(#35506a, #35506a) center / ${({ $active }) => ($active ? 48 : 0)}px 100% no-repeat;
  `,
  Tray: styled.div`
    display: flex;
    align-items: center;
    gap: 8px;
    margin-left: auto;
    margin-right: 16px;
  `,
  Lang: styled.span`
    width: 15px;
    font-size: 11px;
    line-height: 38px;
  `,
  Clock: styled.div`
    display: flex;
    flex-direction: column;
    width: 66px;
    padding-top: 2px;
    margin-left: 5px;
    line-height: 18px;
    text-align: center;
    letter-spacing: -0.5px;
    word-spacing: 1px;
  `,
  Notice: styled.div`
    position: relative;
    width: 48px;
    padding: 12px 0 0 12px;
  `,
  Badge: styled.b`
    position: absolute;
    left: 20px;
    top: 19px;
    width: 15px;
    height: 15px;
    border: 1px solid #78858c;
    border-radius: 50%;
    background: #323c42;
    font-size: 10px;
    line-height: 13px;
    text-align: center;
  `,
  ShowDesktop: styled.i`
    width: 5px;
    border-left: 1px solid #4a6370;
  `,
};
